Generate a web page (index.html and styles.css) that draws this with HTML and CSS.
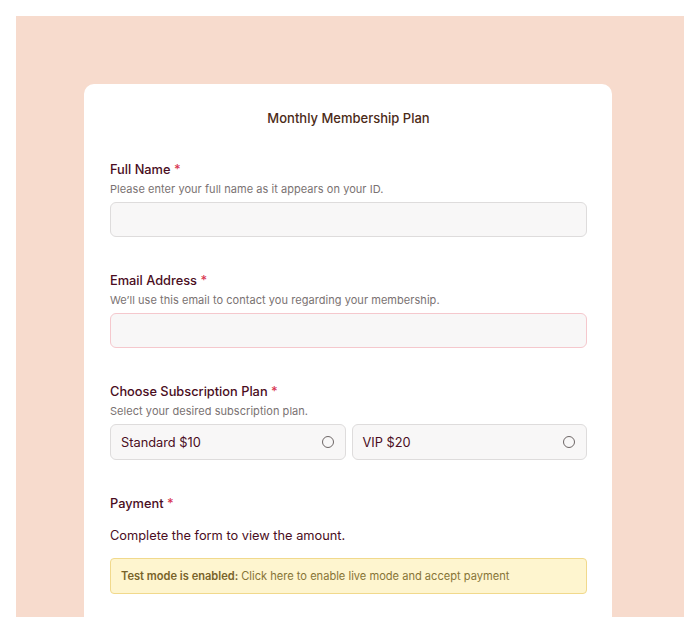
FILE: index.html
```html
<!DOCTYPE html>
<html>
<head>
<meta charset="utf-8">
<link rel="stylesheet" href="styles.css">
</head>
<body>
<div class="frame">
  <div class="card">
    <h1 class="title">Monthly Membership Plan</h1>

    <div class="field">
      <div class="label">Full Name <span class="req">*</span></div>
      <div class="desc">Please enter your full name as it appears on your ID.</div>
      <div class="input"></div>
    </div>

    <div class="field">
      <div class="label">Email Address <span class="req">*</span></div>
      <div class="desc">We’ll use this email to contact you regarding your membership.</div>
      <div class="input input-pink"></div>
    </div>

    <div class="field">
      <div class="label">Choose Subscription Plan <span class="req">*</span></div>
      <div class="desc">Select your desired subscription plan.</div>
      <div class="options">
        <div class="option"><span>Standard $10</span><span class="radio"></span></div>
        <div class="option"><span>VIP $20</span><span class="radio"></span></div>
      </div>
    </div>

    <div class="field">
      <div class="label">Payment <span class="req">*</span></div>
      <div class="amount">Complete the form to view the amount.</div>
      <div class="notice"><b>Test mode is enabled:</b> Click here to enable live mode and accept payment</div>
    </div>
  </div>
</div>
</body>
</html>
```

FILE: styles.css
```css
html, body {
  margin: 0;
  padding: 0;
  background: #ffffff;
}
body {
  padding: 16px;
  font-family: Inter, "Noto Sans", sans-serif;
}
.frame {
  background: #f7dbcd;
  height: 601px;
  overflow: hidden;
  padding: 68px 72px 0 68px;
  box-sizing: border-box;
}
.card {
  background: #ffffff;
  border-radius: 10px;
  padding: 26px 25px 40px 26px;
  min-height: 600px;
}
.title {
  margin: 0 0 36px;
  text-align: center;
  font-size: 13px;
  font-weight: 500;
  color: #4b2a17;
  line-height: 16px;
}
.field {
  margin-bottom: 36px;
}
.label {
  font-size: 12.8px;
  font-weight: 500;
  color: #4a0d22;
  line-height: 16px;
}
.req {
  color: #d8344f;
}
.desc {
  margin-top: 4px;
  font-size: 11px;
  letter-spacing: 0.05px;
  color: #7a7272;
  line-height: 14px;
}
.input {
  margin-top: 6px;
  height: 33px;
  background: #f8f7f7;
  border: 1px solid #dedcdc;
  border-radius: 6px;
}
.input-pink {
  border-color: #f5c8cd;
}
.options {
  margin-top: 6px;
  display: grid;
  grid-template-columns: 1fr 1fr;
  gap: 6px;
}
.option {
  height: 34px;
  display: flex;
  align-items: center;
  justify-content: space-between;
  padding: 0 11px 0 10px;
  background: #f8f7f7;
  border: 1px solid #dedcdc;
  border-radius: 6px;
  font-size: 12.8px;
  color: #4a0d22;
}
.radio {
  width: 10px;
  height: 10px;
  border: 1.2px solid #6d6666;
  border-radius: 50%;
}
.amount {
  margin-top: 16px;
  font-size: 12.8px;
  color: #4a0d22;
  line-height: 16px;
}
.notice {
  margin-top: 14px;
  height: 34px;
  display: flex;
  align-items: center;
  padding: 0 10px;
  background: #fef5cf;
  border: 1px solid #f1d98c;
  border-radius: 4px;
  font-size: 11.1px;
  color: #877436;
}
.notice b {
  font-weight: 600;
  color: #786329;
  margin-right: 3px;
}
```
